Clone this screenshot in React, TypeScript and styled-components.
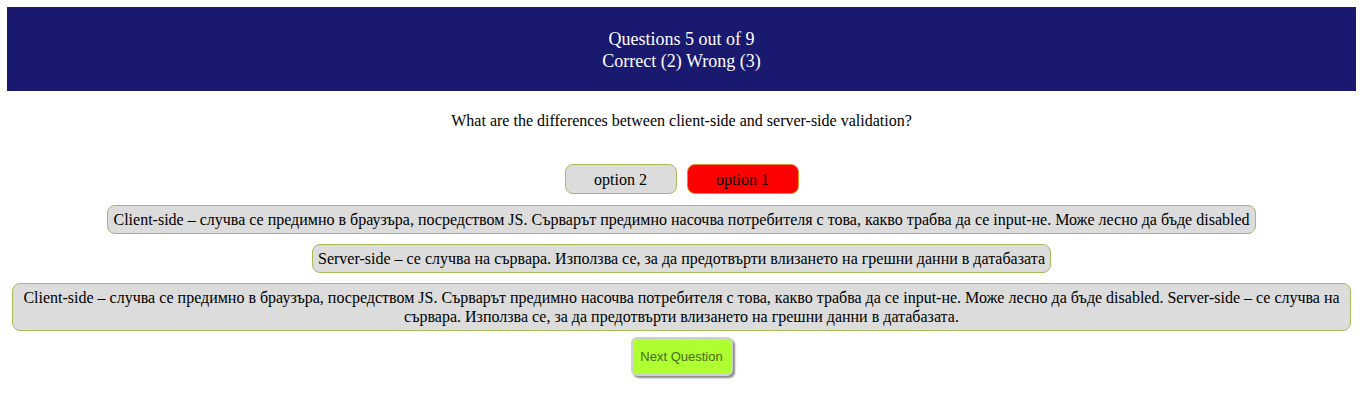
import React from "react";
import styled, { createGlobalStyle } from "styled-components";

const Global = createGlobalStyle`
  html, body { margin: 0; padding: 0; background: #ffffff; }
  body { padding: 7px 6px 7px 7px; font-family: "Liberation Serif", "Times New Roman", serif; color: #000; }
`;

const Page = styled.div`
  display: flex;
  flex-direction: column;
  align-items: center;
`;

const Header = styled.header`
  align-self: stretch;
  height: 84px;
  background: #191970;
  color: #ffffff;
  display: flex;
  flex-direction: column;
  justify-content: center;
  align-items: center;
  font-family: "Liberation Serif", "Times New Roman", serif;
  font-size: 18px;
  line-height: 22px;
  padding-top: 1px;
  box-sizing: border-box;
`;

const Question = styled.p`
  margin: 21px 0 0;
  font-size: 16px;
  line-height: 18px;
  text-align: center;
`;

const OptionRow = styled.div`
  display: flex;
  gap: 10px;
  margin-top: 34px;
`;

const OptionButton = styled.div<{ $wrong?: boolean }>`
  width: 112px;
  box-sizing: border-box;
  padding: 5px 0 4px;
  font-family: "Liberation Serif", "Times New Roman", serif;
  font-size: 16px;
  line-height: 19px;
  text-align: center;
  border-radius: 8px;
  border: 1px solid ${(p) => (p.$wrong ? "#e0901c" : "#a5bd55")};
  background: ${(p) => (p.$wrong ? "#ff0000" : "#dcdcdc")};
`;

const AnswerList = styled.div`
  display: flex;
  flex-direction: column;
  align-items: center;
  gap: 10px;
  margin-top: 11px;
  padding: 0 5px;
  align-self: stretch;
`;

const Answer = styled.div`
  box-sizing: border-box;
  max-width: 100%;
  padding: 4px 5px;
  font-family: "Liberation Serif", "Times New Roman", serif;
  font-size: 16px;
  line-height: 19px;
  text-align: center;
  border-radius: 8px;
  border: 1px solid #a5bd55;
  background: #dcdcdc;
`;

const NextButton = styled.button`
  margin-top: 6px;
  width: 102px;
  height: 39px;
  background: #adff2f;
  color: #4b6a1a;
  font-family: "Liberation Sans", Arial, sans-serif;
  font-size: 13px;
  border: 2px solid #d0d0d0;
  border-radius: 6px;
  box-shadow: 2px 2px 2px #8a8a8a;
  cursor: pointer;
  padding: 0;
`;

const answers = [
  "Client-side – случва се предимно в браузъра, посредством JS. Сърварът предимно насочва потребителя с това, какво трабва да се input-не. Може лесно да бъде disabled",
  "Server-side – се случва на сървара. Използва се, за да предотвърти влизането на грешни данни в датабазата",
  "Client-side – случва се предимно в браузъра, посредством JS. Сърварът предимно насочва потребителя с това, какво трабва да се input-не. Може лесно да бъде disabled. Server-side – се случва на сървара. Използва се, за да предотвърти влизането на грешни данни в датабазата.",
];

export default function App() {
  return (
    <>
      <Global />
      <Page>
        <Header>
          <div>Questions 5 out of 9</div>
          <div>Correct (2) Wrong (3)</div>
        </Header>
        <Question>What are the differences between client-side and server-side validation?</Question>
        <OptionRow>
          <OptionButton>option 2</OptionButton>
          <OptionButton $wrong>option 1</OptionButton>
        </OptionRow>
        <AnswerList>
          {answers.map((a, i) => (
            <Answer key={i}>{a}</Answer>
          ))}
        </AnswerList>
        <NextButton>Next Question</NextButton>
      </Page>
    </>
  );
}
